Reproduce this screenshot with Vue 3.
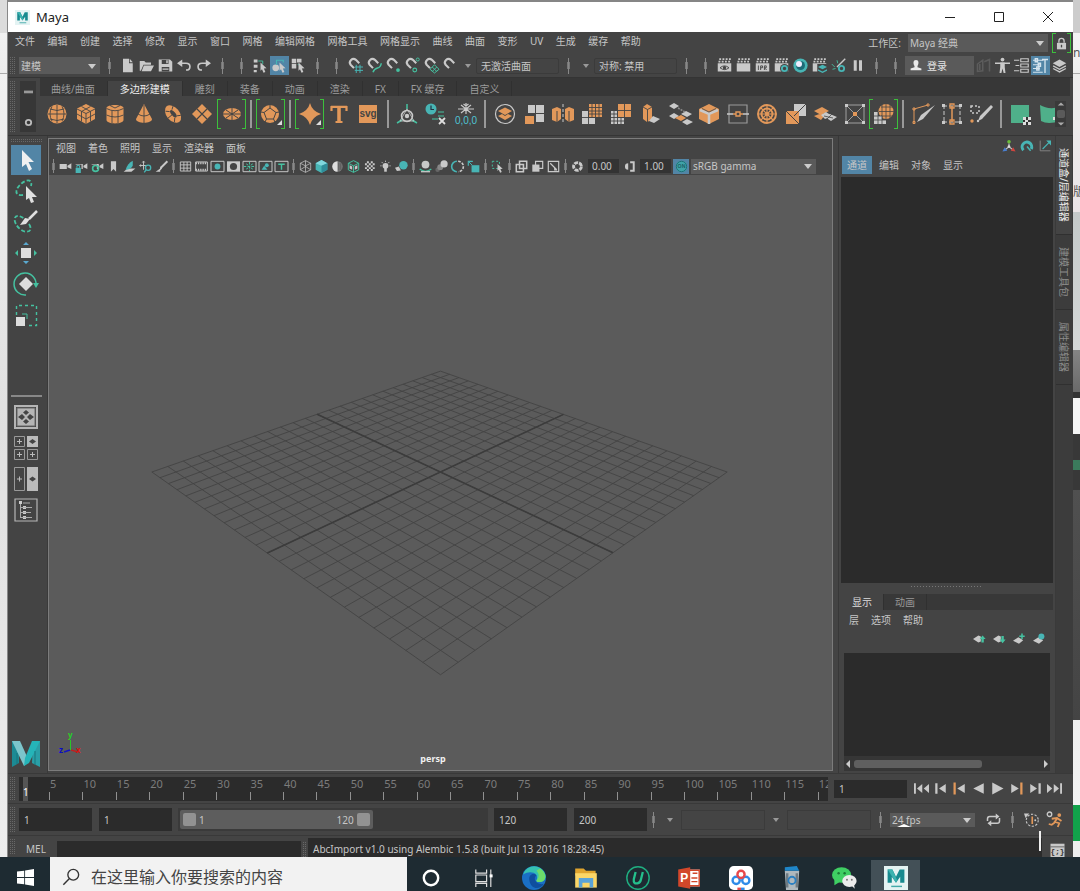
<template>
  <div class="desktop">
    <div class="screen">
      <div class="behind behind--left"></div>

      <main class="maya">
        <header class="titlebar">
          <svg class="title-logo" viewBox="0 0 20 20" v-html="icons.mayaTile"></svg>
          <h1>Maya</h1>
          <div class="window-buttons">
            <button aria-label="minimize"><svg viewBox="0 0 12 12"><path d="M1 6.500H11" stroke="#222" fill="none" /></svg></button>
            <button aria-label="maximize"><svg viewBox="0 0 12 12"><path d="M1.500 1.500H10.500V10.500H1.500z" stroke="#222" fill="none" /></svg></button>
            <button aria-label="close"><svg viewBox="0 0 12 12"><path d="M1 1L11 11M11 1L1 11" stroke="#222" fill="none" /></svg></button>
          </div>
        </header>

        <div class="menubar">
          <nav class="main-menu">
            <button v-for="m in menus" :key="m">{{ m }}</button>
          </nav>
          <div class="workspace-pick">
            <label for="workspace">工作区:</label>
            <span class="combo combo--workspace">
              <select id="workspace"><option>Maya 经典</option></select>
            </span>
            <button class="lock framed" aria-label="lock"><svg viewBox="0 0 20 20" v-html="icons.lock"></svg></button>
          </div>
        </div>

        <!-- 状态行 -->
        <div class="status-line">
          <i class="grip"></i>
          <span class="combo combo--mode">
            <select aria-label="menu set"><option>建模</option></select>
          </span>
          <template v-for="(t, i) in statusA" :key="'a' + i">
            <i v-if="t === '|'" class="sep"></i>
            <i v-else-if="t === 'v'" class="drop"></i>
            <button v-else class="cell" :class="{ on: t === 'selObject' }" :aria-label="t"><svg viewBox="0 0 20 20" v-html="icons[t]"></svg></button>
          </template>
          <input class="status-field" value="无激活曲面" aria-label="live surface">
          <i class="sep"></i>
          <i class="drop"></i>
          <input class="status-field" value="对称: 禁用" aria-label="symmetry">
          <template v-for="(t, i) in statusB" :key="'b' + i">
            <i v-if="t === '|'" class="sep"></i>
            <button v-else class="cell" :aria-label="t"><svg viewBox="0 0 20 20" v-html="icons[t]"></svg></button>
          </template>
          <button class="login">
            <svg viewBox="0 0 20 20" v-html="icons.user"></svg>登录
          </button>
          <button v-for="t in statusC" :key="t" class="cell" :class="{ on: t === 'toolSettings' }" :aria-label="t">
            <svg viewBox="0 0 20 20" v-html="icons[t]"></svg>
          </button>
        </div>

        <!-- 工具架 -->
        <section class="shelf">
          <i class="grip"></i>
          <div class="shelf-side">
            <button aria-label="shelf menu"><svg viewBox="0 0 10 10"><path d="M0 4h10v3H0z" fill="#999" /></svg></button>
            <button aria-label="shelf options"><svg viewBox="0 0 10 10"><circle cx="5" cy="5" r="3" stroke="#bbb" stroke-width="2" fill="none" /></svg></button>
          </div>
          <div class="shelf-main">
            <div class="shelf-tabs">
              <button v-for="s in shelfTabs" :key="s" :class="{ active: s === activeShelf }" @click="activeShelf = s">{{ s }}</button>
            </div>
            <div class="shelf-icons">
              <template v-for="(t, i) in shelfIcons" :key="i">
                <i v-if="t === '|'" class="shelf-sep"></i>
                <button v-else class="shelf-cell" :class="{ framed: framed.includes(t) }" :aria-label="t">
                  <svg viewBox="0 0 20 20" v-html="icons[t]"></svg>
                </button>
              </template>
              <div class="shelf-scroll">
                <button aria-label="up"><svg viewBox="0 0 10 6"><path d="M1 5L5 1L9 5z" fill="#aaa" /></svg></button>
                <i></i>
                <button aria-label="down"><svg viewBox="0 0 10 6"><path d="M1 1L5 5L9 1z" fill="#aaa" /></svg></button>
              </div>
            </div>
          </div>
        </section>

        <div class="workspace">
          <aside class="toolbox">
            <i class="grip grip--flat"></i>
            <div class="tools">
              <button v-for="t in tools" :key="t" :class="{ on: t === 'arrow' }" :aria-label="t"><svg viewBox="0 0 30 30" v-html="icons[t]"></svg></button>
            </div>
            <div class="layouts">
              <button v-for="t in layouts" :key="t" :aria-label="t"><svg viewBox="0 0 30 30" v-html="icons[t]"></svg></button>
            </div>
            <svg class="m-logo" viewBox="0 0 28 26" v-html="icons.mLogo"></svg>
          </aside>

          <section class="panel">
            <div class="panel-menu">
              <button v-for="m in panelMenus" :key="m">{{ m }}</button>
            </div>
            <div class="panel-tools">
              <template v-for="(t, i) in panelIcons" :key="i">
                <i v-if="t === '|'" class="sep sep--panel"></i>
                <button v-else class="panel-cell" :aria-label="t"><svg viewBox="0 0 20 20" v-html="icons[t]"></svg></button>
              </template>
              <input class="num" value="0.00" aria-label="exposure">
              <button class="panel-cell" aria-label="gamma"><svg viewBox="0 0 20 20" v-html="icons.gamma"></svg></button>
              <input class="num" value="1.00" aria-label="gamma value">
              <button class="panel-cell on" aria-label="color management"><svg viewBox="0 0 20 20" v-html="icons.cmOn"></svg></button>
              <span class="combo combo--view">
                <select aria-label="view transform"><option>sRGB gamma</option></select>
              </span>
            </div>
            <div class="canvas">
              <svg class="grid-svg" viewBox="0 0 784 595">
                <path :d="gridPath" stroke="#444" stroke-width="0.9" fill="none" />
                <path :d="axisPath" stroke="#3c3c3c" stroke-width="1.600" fill="none" />
              </svg>
              <svg class="gizmo" viewBox="0 0 26 26">
                <path d="M12.500 8V18" stroke="#28c828" />
                <path d="M12 18L6 20" stroke="#1414c0" stroke-width="1.500" />
                <path d="M13 18L20 20" stroke="#c02020" stroke-width="1.500" />
                <text x="10" y="6" fill="#28d028" font-size="8" font-weight="700">y</text>
                <text x="1" y="21" fill="#0a0ac8" font-size="8" font-weight="700">z</text>
                <text x="18" y="21" fill="#d81414" font-size="8" font-weight="700">x</text>
              </svg>
              <span class="camera-name">persp</span>
            </div>
          </section>

          <aside class="channel">
            <div class="channel-top">
              <svg v-for="t in channelIcons" :key="t" viewBox="0 0 20 20" v-html="icons[t]"></svg>
            </div>
            <div class="channel-menu">
              <button class="on">通道</button>
              <button>编辑</button>
              <button>对象</button>
              <button>显示</button>
            </div>
            <div class="channel-box"></div>
            <div class="splitter"></div>
            <div class="layer">
              <div class="layer-tabs">
                <button class="active">显示</button>
                <button>动画</button>
              </div>
              <div class="layer-menu">
                <button>层</button>
                <button>选项</button>
                <button>帮助</button>
              </div>
              <div class="layer-tools">
                <button v-for="t in layerIcons" :key="t" :aria-label="t"><svg viewBox="0 0 20 20" v-html="icons[t]"></svg></button>
              </div>
              <div class="layer-list">
                <div class="hscroll">
                  <svg viewBox="0 0 8 10"><path d="M6 1V9L2 5z" fill="#ccc" /></svg>
                  <div class="hscroll-track"><i></i></div>
                  <svg viewBox="0 0 8 10"><path d="M2 1V9L6 5z" fill="#ccc" /></svg>
                </div>
              </div>
            </div>
          </aside>

          <div class="side-tabs">
            <button class="active">通道盒/层编辑器</button>
            <button>建模工具包</button>
            <button>属性编辑器</button>
          </div>
        </div>

        <!-- 时间滑块 -->
        <div class="time-row">
          <i class="grip"></i>
          <div class="timeline">
            <b class="now">1</b>
            <span v-for="f in frames" :key="f" class="tick">{{ f }}</span>
          </div>
          <input class="field field--now" value="1" aria-label="current time">
          <div class="playback">
            <button v-for="t in playback" :key="t" :aria-label="t"><svg viewBox="0 0 20 20" v-html="icons[t]"></svg></button>
          </div>
        </div>

        <div class="range-row">
          <i class="grip"></i>
          <input class="field" value="1" aria-label="animation start">
          <input class="field" value="1" aria-label="playback start">
          <div class="range-slider">
            <div class="range-bar">
              <i></i><span>1</span><span class="range-end">120</span><i></i>
            </div>
          </div>
          <input class="field" value="120" aria-label="playback end">
          <input class="field" value="200" aria-label="animation end">
          <div class="range-right">
            <i class="sep sep--range"></i>
            <i class="drop"></i>
            <input class="ghost-field" aria-label="animation layer">
            <i class="drop"></i>
            <input class="ghost-field" aria-label="character set">
            <i class="sep"></i>
            <span class="combo combo--fps">
              <select aria-label="frame rate"><option>24 fps</option></select>
              <i class="glint"></i>
            </span>
            <button class="cell cell--loop" aria-label="loop"><svg viewBox="0 0 20 20" v-html="icons.loop"></svg></button>
            <i class="sep"></i>
            <button class="cell" aria-label="auto key"><svg viewBox="0 0 20 20" v-html="icons.autoKey"></svg></button>
            <button class="cell cell--run" aria-label="preferences"><svg viewBox="0 0 20 20" v-html="icons.runner"></svg></button>
          </div>
        </div>

        <div class="command-row">
          <i class="grip"></i>
          <label for="mel">MEL</label>
          <input id="mel" class="mel">
          <i class="grip grip--mid"></i>
          <output>AbcImport v1.0 using Alembic 1.5.8 (built Jul 13 2016 18:28:45)</output>
          <i class="caret"></i>
          <button class="script" aria-label="script editor"><svg viewBox="0 0 20 20" v-html="icons.script"></svg></button>
        </div>
      </main>

      <div class="behind behind--right">
        <span class="frag frag--a">n</span>
        <span class="frag frag--b">版</span>
      </div>
    </div>

    <footer class="taskbar">
      <button class="start" aria-label="start">
        <svg viewBox="0 0 20 20"><path d="M0 3L8.500 2V9.500H0zM9.500 1.800L20 0V9.500H9.500zM0 10.500H8.500V18L0 17zM9.500 10.500H20V20L9.500 18.300z" fill="#fff" /></svg>
      </button>
      <label class="search">
        <svg viewBox="0 0 20 20"><circle cx="12.500" cy="7.500" r="6" fill="none" stroke="#333" stroke-width="1.500" /><path d="M8 12L1.500 18.500" stroke="#333" stroke-width="1.600" /></svg>
        <input placeholder="在这里输入你要搜索的内容" aria-label="search">
      </label>
      <div class="apps">
        <button v-for="a in apps" :key="a" :class="{ running: a === 'mayaTile' }" :aria-label="a"><svg viewBox="0 0 20 20" v-html="icons[a]"></svg></button>
      </div>
    </footer>
  </div>
</template>

<script setup>
import { ref } from 'vue';

const menus = ['文件', '编辑', '创建', '选择', '修改', '显示', '窗口', '网格', '编辑网格', '网格工具', '网格显示', '曲线', '曲面', '变形', 'UV', '生成', '缓存', '帮助'];
const panelMenus = ['视图', '着色', '照明', '显示', '渲染器', '面板'];
const shelfTabs = ['曲线/曲面', '多边形建模', '雕刻', '装备', '动画', '渲染', 'FX', 'FX 缓存', '自定义'];
const activeShelf = ref('多边形建模');

// '|' 是分隔条, 'v' 是下拉箭头
const statusA = ['|', 'newFile', 'open', 'save', 'undo', 'redo', '|', '|', 'selHier', 'selObject', 'selComp', '|', '|', 'snapGrid', 'snapCurve', 'snapPoint', 'snapCenter', 'snapPlane', 'magnet', 'v'];
const statusB = ['|', '|', 'renderEye', 'clap', 'ipr', 'clapGear', 'ball', 'clapLayers', 'lightEdit', 'pause', '|', '|'];
const statusC = ['ghostBox', 'human', 'attrs', 'toolSettings', 'layers'];

const shelfIcons = ['sphere', 'cube', 'cylinder', 'cone', 'torus', 'plane', 'disc', '|', 'platonic', '|', 'superShape', 'typeT', 'svgText', '|',
  'pivot', 'history', 'freeze', '|', 'combine', 'separate', 'mirror', 'smooth', 'reduce', 'extrude', 'bridge', 'bevel', 'collapse', 'wheel', 'triangulate', 'merge', 'target', 'sculptBall', '|',
  'multiCut', 'edgeLoop', 'quadDraw', '|', 'uvPlane', 'uvCyl'];
const framed = ['disc', 'platonic', 'superShape', 'sculptBall'];

const tools = ['arrow', 'lasso', 'paintSel', 'move', 'rotate', 'scale'];
const layouts = ['single', 'four', 'two', 'outliner'];

const panelIcons = ['|', 'cam', 'camLock', 'camAttr', 'bookmark', 'imagePlane', 'panZoom', 'pencil', '|',
  'gridIcon', 'film', 'resGate', 'gateMask', 'fieldChart', 'safeAction', 'safeTitle', '|',
  'wire', 'shaded', 'halfBall', 'textured', 'checker', 'bulb', 'shadow', '|',
  'ao', 'blur', 'aa', 'dof', '|', 'isolate', '|', 'xray', 'xrayJoint', 'expo', '|', 'aperture'];
const channelIcons = ['manip', 'speed', 'hyper'];
const layerIcons = ['layerUp', 'layerDown', 'layerNew', 'layerNewSel'];
const playback = ['toStart', 'stepBack', 'keyBack', 'playBack', 'play', 'keyNext', 'stepNext', 'toEnd'];
const apps = ['cortana', 'taskView', 'edge', 'folder', 'uninst', 'ppt', 'netdisk', 'bin', 'wechat', 'mayaTile'];
const frames = Array.from({ length: 24 }, (_, i) => (i + 1) * 5);

// 地面网格: 单位正方形 -> 透视四边形
const A = [392, 196], B = [679, 297], C = [392, 500], D = [103, 297];
const d1 = [B[0] - C[0], B[1] - C[1]];
const d2 = [D[0] - C[0], D[1] - C[1]];
const s = [A[0] - B[0] + C[0] - D[0], A[1] - B[1] + C[1] - D[1]];
const det = d1[0] * d2[1] - d2[0] * d1[1];
const g = (s[0] * d2[1] - d2[0] * s[1]) / det;
const h = (d1[0] * s[1] - s[0] * d1[1]) / det;

const project = (u, v) => {
  const w = g * u + h * v + 1;
  return [0, 1].map(k => (((B[k] - A[k] + g * B[k]) * u + (D[k] - A[k] + h * D[k]) * v + A[k]) / w).toFixed(1)).join(' ');
};
const crossLines = t => `M${project(t, 0)}L${project(t, 1)}M${project(0, t)}L${project(1, t)}`;
const gridPath = Array.from({ length: 25 }, (_, i) => crossLines(i / 24)).join('');
const axisPath = crossLines(0.5);

// 图标颜色
const W = '#c9c9c9';
const O = '#e2985a';
const T = '#48b5b5';
const E = '#45c1a0';
const K = '#444';

const fill = (c, d) => `<path d="${d}" fill="${c}"/>`;
const line = (c, d, w = 1.5) => `<path d="${d}" fill="none" stroke="${c}" stroke-width="${w}"/>`;
const dash = (c, d, w, gap) => `<path d="${d}" fill="none" stroke="${c}" stroke-width="${w}" stroke-dasharray="${gap}"/>`;
const dot = (c, x, y, r) => `<circle cx="${x}" cy="${y}" r="${r}" fill="${c}"/>`;
const ring = (c, x, y, r, w = 1.5) => `<circle cx="${x}" cy="${y}" r="${r}" fill="none" stroke="${c}" stroke-width="${w}"/>`;

const clapBoard = fill(W, 'M1 7H19V18H1z') + dash(W, 'M2 4.800H19M3 1.500H19', 2.2, '2.500 1.800');
const magnetShape = line(W, 'M8 13.500L3.500 9A4.800 4.800 0 0 1 10.500 2.500L15 7', 2.8);
const cursor = fill(W, 'M10 6L18 13.500L14.500 14L16.500 18.500L14 19.500L12 15L10 17z');
const camera = fill(W, 'M1 6H12V14H1zM13 9L19 5V14L13 11z');
const layerShape = fill(W, 'M0 10L9 4L13 6V14L9 16z');

const icons = {
  mayaTile: fill('#e4f3f3', 'M0 0H20V20H0z') + fill('#178a8f', 'M3 3H7L10 9L13 3H17V14H13.500V9L10 14L6.500 9V14H3z') + fill('#3bb3b0', 'M3 3H7L11 12L10 14z') + line('#4aa', 'M6 17H15', 1.2),
  mLogo: fill('#1c8a94', 'M0 0H7V22L0 26z') + fill('#2a9ea6', 'M21 0H28V26L20 22z') + fill('#7cc5cb', 'M0 0H8L17 20L12 25z') + fill('#25b4b8', 'M20 0H28L17 22L12 25L13 17z') + line('#16747c', 'M5 12V23M23 10V24', 1),
  lock: fill(W, 'M3 9H17V19H3z') + line(W, 'M6 9V6A4 4 0 0 1 14 6V9', 2) + fill(K, 'M9 12H11V16H9z'),

  newFile: fill(W, 'M4 1H12V7H17V19H4z') + fill(W, 'M13 1L17 5.500H13z'),
  open: fill(W, 'M1 17V4H7L9 6H16V9H6L2.500 17zM6.500 10H20L16 17.500H3.500z'),
  save: fill(W, 'M1 2H16L19 5V18H1z') + fill(K, 'M5 2.500H14V8H5zM5 12H15V18H5z') + fill(W, 'M11 3H13V7H11zM6 14H14V15.500H6z'),
  undo: line(W, 'M3 7H12C19 7 19 16 12 16', 2.2) + fill(W, 'M0 7L7 2V12z'),
  redo: line(W, 'M17 7H8C1 7 1 16 8 16', 2.2) + fill(W, 'M20 7L13 2V12z'),
  selHier: fill(W, 'M1 2H6V6H1zM1 9H6V13H1zM1 16H5V19H1z') + line(E, 'M7 4H13V8', 1.2) + cursor,
  selObject: dot(W, 5, 13, 4.5) + line(T, 'M6 9V3H15V6', 1.5) + cursor,
  selComp: fill(W, 'M1 1H7V7H1zM8 1H14V6H8zM1 8H7V14H1z') + line(E, 'M9 8L14 13', 1.2) + cursor,
  magnet: magnetShape,
  snapGrid: line(T, 'M9 12H20M9 16.500H20M11 9V20M16 9V20', 1.3) + magnetShape,
  snapCurve: line(E, 'M8 19C11 10 18 17 19 7', 2) + magnetShape,
  snapPoint: magnetShape + dot(E, 16, 16, 2.5),
  snapCenter: magnetShape + ring(E, 17, 2, 2, 1.3) + ring(E, 13, 16, 2.5, 1.5),
  snapPlane: line(E, 'M8 15L14 9L20 15L14 20zM11 12L17 18M17 12L11 18', 1.3) + magnetShape,

  renderEye: clapBoard + line(K, 'M4 13Q10 8 16 13Q10 18 4 13', 1.2) + dot(K, 10, 13, 2.2),
  clap: clapBoard,
  ipr: clapBoard + line(K, 'M4.500 10V16M7.500 16V10.500H10V13H7.500M12.500 16V10.500H15V13H12.500L15.500 16', 1.2),
  clapGear: clapBoard + dot(K, 14, 14, 6) + ring(T, 14, 14, 3.5, 2.5),
  ball: dot(T, 10, 10, 9.5) + dot('#1d6b77', 10, 10, 6) + dot('#eef', 8, 8, 4),
  clapLayers: clapBoard + fill(K, 'M7 8H20V20H7z') + fill(T, 'M8 12L14 9L20 12L14 15zM8 15L14 18L20 15V17L14 20L8 17z'),
  lightEdit: line(W, 'M19 1L8 12', 2) + line(E, 'M1 8L5 12M2 15L6 14M8 3L9 7', 1.2) + ring(T, 14, 14, 3.5, 2.5),
  pause: fill(W, 'M5 3H9V17H5zM12 3H16V17H12z'),
  user: fill('#e8e8e8', 'M10 1C15 1 15 7 12.500 11V13L19 15V18H1V15L7.500 13V11C5 7 5 1 10 1z'),
  ghostBox: line('#5c5c5c', 'M2 8L9 3V17L2 18zM11 5L18 2V18M5 8V16', 2),
  human: dot(W, 10, 2, 2.5) + line(W, 'M0 7H20', 2) + fill(W, 'M7 6H13V12L14 20H11.500L10 14L8.500 20H6L7 12z'),
  attrs: line(W, 'M0 3H7M2 10H7M0 17H7', 1.5) + line(W, 'M9 1H19V5H9zM9 8H19V12H9zM9 15H19V19H9z', 1.5),
  toolSettings: line('#d5e4ee', 'M0 3H14M0 9H10M0 14H9M0 19H13', 1.5) + line('#d5e4ee', 'M3 1H6V5H3zM7 7H10V11H7zM5 12H8V16H5zM12 2H20M16 3V20', 1.8),
  layers: fill(W, 'M1 7L10 2L19 7L10 12z') + line(W, 'M1.500 10.500L10 15L18.500 10.500M1.500 14L10 18.500L18.500 14', 1.8),

  sphere: dot(O, 10, 10, 9.5) + line(K, 'M1 10H19M3 5Q10 8 17 5M3 15Q10 18 17 15M10 1V19M5 2.500Q1 10 5 17M15 2.500Q19 10 15 17', 0.9),
  cube: fill(O, 'M10 0L19 4.500V15L10 20L1 15V4.500z') + line(K, 'M1 5L10 9.500L19 5M10 9.500V20M5.500 2.500L14.500 7.500V17.500M14.500 2.500L5.500 7.500V17.500M1 10L10 15L19 10', 0.9),
  cylinder: fill(O, 'M1.500 4C1.500 0 18.500 0 18.500 4V16C18.500 20.500 1.500 20.500 1.500 16z') + line(K, 'M1.500 4.500Q10 9 18.500 4.500M1.500 11Q10 15 18.500 11M7 6.500V19M13 6.500V19M5 1.500L10 4L15 1.500', 0.9),
  cone: fill(O, 'M10 0L18 15C18 20 2 20 2 15z') + line(K, 'M4 10Q10 14 16 10M10 1V19', 0.9),
  torus: '<g transform="rotate(50 10 10)">' + `<ellipse cx="10" cy="10" rx="10" ry="6.500" fill="${O}"/><ellipse cx="10" cy="9.500" rx="4.500" ry="2" fill="${K}"/>` + line(K, 'M10 11V17M4 5L6 8M16 5L14 8M3 14L6 11M17 14L14 11', 0.9) + '</g>',
  plane: fill(O, 'M10 0L20 10L10 20L0 10z') + line(K, 'M5 5L15 15M15 5L5 15', 1.2),
  disc: `<ellipse cx="10" cy="10" rx="9" ry="6" fill="${O}"/>` + line(K, 'M10 4V16M1 10H19M4 6L16 14M16 6L4 14', 1),
  platonic: dot(O, 9, 10, 9) + line(K, 'M9 4L15 8.500L12.500 15H5.500L3 8.500zM9 4V1M15 8.500L18 8M12.500 15L14 18M5.500 15L4 18M3 8.500L0 8', 1) + fill('#ddd', 'M21 16V21H16z'),
  superShape: fill(O, 'M10 -1Q12 7 21 10Q12 13 10 21Q8 13 -1 10Q8 7 10 -1z') + fill('#ddd', 'M21 16V21H16z'),
  typeT: line(O, 'M2 2.800H18M10 2V18M6.500 18H13.500M2.500 2V7M17.500 2V7', 2.2) + line(O, 'M10 2V18', 3.5),
  svgText: fill(O, 'M1 1H19V19H1z') + '<text x="10" y="13" font-size="10" font-weight="700" text-anchor="middle" fill="#444" font-family="Liberation Sans">svg</text>',
  pivot: ring(W, 10, 12, 5.5, 1.5) + dot(W, 10, 12, 2.2) + line(E, 'M10 0V5M5 16L0 19M15 16L20 19', 1.5) + line(W, 'M10 5L3 17H17z', 0.8),
  history: dot(T, 5, 5, 5.5) + line('#234', 'M5 1.500V5.500H8', 1.2) + line(E, 'M12 8H18M12 12H18M6 15H12', 1.2) + line('#ddd', 'M13 14L19 20M19 14L13 20', 1.8),
  freeze: line(W, 'M10 -1V10M5 1L15 9M15 1L5 9M7.500 0L10 2L12.500 0M2 5H18', 1.2) + '<text x="10" y="20" font-size="10" text-anchor="middle" fill="#4fc3d3" font-family="Liberation Sans">0,0,0</text>',
  combine: ring(W, 10, 10, 9.5, 1.2) + fill(O, 'M3 7L10 3.500L17 7L10 11zM3 12L7 10L10 12L13 10L17 12L10 16z'),
  separate: fill(W, 'M4 1H11V9H4zM12 1H20V9H12zM12 10H20V18H12z') + fill(O, 'M1 12H10V20H1z'),
  mirror: fill(O, 'M-1 5L4 3L8 5V15L4 18L-1 16zM12 5L16 3L21 5V16L16 18L12 15z') + line(K, 'M4 7V18M16 7V18', 1) + dash(W, 'M10 0V20', 1, '3 2'),
  smooth: fill(O, 'M7 0H20V13H7z') + fill(W, 'M0 7H6V14H13V20H0z') + line(K, 'M10 0V13M13.500 0V13M17 0V13M7 3.500H20M7 7H20M7 10H20M6.500 14V20M0 13.500H7', 0.9),
  reduce: fill(O, 'M7 0H20V13H7z') + fill(W, 'M0 7H6V14H13V20H0z') + line(K, 'M13.500 0V13M7 6.500H20M3 7V20M6.500 13V20M10 13V20M0 10H7M0 13.500H7M0 17H13', 0.9),
  extrude: fill(O, 'M2 3L6 0L11 3V16L6 18L2 15z') + line(K, 'M2 3L6.500 5.500L11 3M6.500 5.500V18', 0.9) + fill(W, 'M12 12L19 15L13 19L8 17z'),
  bridge: fill(W, 'M-1 2L4 -1L9 2L4 5zM-1 12L4 9L9 12L4 15zM16 7L22 10L17 13L11 10zM12 18L17 15L23 18L17 21z') + fill(O, 'M5 14L11 11L16 14L11 17z') + dash('#888', 'M8 4L15 8', 1.5, '2 1'),
  bevel: fill(O, 'M10 0L20 5V15L10 20L0 15V5z') + line(W, 'M1 6L10 10L19 6M10 10V20', 2.5) + line(K, 'M3 4.500L10 8L17 4.500', 0.8),
  collapse: line('#999', 'M1 1H19V19H1z', 1.2) + line(W, 'M-1 10H5M15 10H21', 1.5) + line(O, 'M8 8H12V12H8zM5 10H8M12 10H15', 1.4),
  wheel: ring(O, 10, 10, 9, 2) + ring(O, 10, 10, 5.5, 2) + dot(O, 10, 10, 2) + line(O, 'M10 1V19M1 10H19M3.500 3.500L16.500 16.500M16.500 3.500L3.500 16.500', 1.2),
  triangulate: fill(W, 'M8 0H20V12H8z') + fill(O, 'M0 7H13V20H0z') + line(K, 'M0 7L13 20M8 12L20 0', 1),
  merge: fill(O, 'M-1 7L7 3L14 7L6 11zM-1 12L7 9L10 11L6 16z') + fill(W, 'M10 13L15 10L22 13L16 17zM6 11L11 8L17 12L10 15z') + line(K, 'M9 12L18 14M12 15L17 10', 0.8),
  target: line('#aaa', 'M1 1H19V19H1zM1 1L19 19M19 1L1 19', 0.9) + fill(W, 'M0 0H3V3H0zM17 0H20V3H17zM0 17H3V20H0zM17 17H20V20H17z') + fill(O, 'M8 8H12V12H8z'),
  sculptBall: dot(O, 12, 7.5, 7.5) + line(K, 'M5 7.500H20M12 0V15M7 3H18M7 12H18M8 1V14M16 1V14', 0.8) + fill(W, 'M0 8H4V12H8V16H12V20H0z') + line(K, 'M4 8V20M8 12V20M0 12H8M0 16H12', 0.8),
  multiCut: line(O, 'M1 19V5L15 1', 1) + line(O, 'M0 17.500H2V19.500H0zM0 4H2V6H0zM14 0H16V2H14z', 1) + fill(W, 'M22 1L10 15L4 18L8 11z'),
  edgeLoop: dash(W, 'M1 2H19M1 18H19M2 1V19M18 1V19', 1, '4 2') + line(O, 'M10 2V18', 1.5) + line(O, 'M8 0H12V4H8zM8 16H12V20H8z', 1.3) + fill(W, 'M0 0H3V3H0zM17 0H20V3H17zM0 17H3V20H0zM17 17H20V20H17z'),
  quadDraw: dash(W, 'M0 2H8V9H0z', 1.5, '2 2') + dot(O, 1, 17, 1.7) + dot(W, 7, 17, 1.2) + fill(W, 'M22 3L11 15L7 17L9 12L20 1z'),
  uvPlane: fill('#4fb08a', 'M1 1H19V19H1z') + fill('#333', 'M13 13H21V21H13z') + fill('#ddd', 'M13 13H16V16H13zM18 13H21V16H18zM15 16H18V18H15zM13 18H16V21H13zM18 18H21V21H18z'),
  uvCyl: fill('#4fb08a', 'M0 1Q8 6 20 3V17Q8 21 1 17z') + fill('#ddd', 'M13 13H16V16H13zM18 13H21V16H18zM15 16H18V18H15z'),

  arrow: fill('#f0f0f0', 'M11 5L23 17H17.500L21 24L18 26L15 19L11 22z'),
  lasso: dash(E, 'M12 19C3 20 4 13 10 8C15 3 22 3 20 10', 1.8, '4 2') + fill('#e0e0e0', 'M15 10L26 21H21L23 26L20 27L18 22L15 24z'),
  paintSel: dash(E, 'M18 17C23 25 15 27 9 22C2 16 2 8 8 9C11 10 14 12 16 14', 1.8, '4 2') + line('#e0e0e0', 'M26 4L18 12', 2.5) + fill('#e0e0e0', 'M19 12L15 17L9 18L14 11z'),
  move: fill('#ddd', 'M10 10H20V20H10z') + fill('#5aa9d0', 'M12 7L15 4L18 7zM12 23H18L15 26z') + fill(E, 'M4 15L7 12V18zM26 15L23 12V18z'),
  rotate: fill('#ddd', 'M15 8L22 15L15 22L8 15z') + line(E, 'M25 16A11 11 0 1 0 15 26', 1.5) + fill(E, 'M22 14H28L25 19z'),
  scale: fill('#ddd', 'M5 17H14V26H5z') + dash(E, 'M5.500 15V5.500H25.500V25.500H16', 1.4, '3 3') + line(E, 'M11 14H16V19', 1),
  single: line('#b5b5b5', 'M4 4H26V26H4z', 2) + fill('#b5b5b5', 'M6 6H24V24H6z') + fill(K, 'M15 8L18 10.500L15 13L12 10.500zM11 12L14 15L11 18L7 15zM19 12L23 15L19 18L16 15zM15 17L18 19.500L15 22L12 19.500z') + line('#666', 'M6 6H24V24H6z', 1),
  four: line('#999', 'M3.500 3.500H13.500V13.500H3.500zM3.500 16.500H13.500V26.500H3.500zM16.500 16.500H26.500V26.500H16.500z', 1) + fill('#bbb', 'M16 3H27V14H16z') + fill(K, 'M18 8.500L21.500 6L25 8.500L21.500 11z') + line('#bbb', 'M8.500 6V11M6 8.500H11M8.500 19V24M6 21.500H11M21.500 19V24M19 21.500H24', 1),
  two: line('#999', 'M3.500 3.500H13.500V26.500H3.500z', 1) + fill('#bbb', 'M16 3H27V27H16z') + fill(K, 'M18 15L21.500 12.500L25 15L21.500 17.500z') + line('#bbb', 'M8.500 12.500V17.500M6 15H11', 1),
  outliner: line('#b5b5b5', 'M4 4H26V26H4z', 1.2) + fill('#ccc', 'M8 6H11V9H8zM12 11H15V14H12zM12 16H15V19H12zM12 21H15V24H12z') + line('#aaa', 'M12 8H19M9.500 9V23M10 12.500H21M10 17.500H20M10 22.500H21', 1),

  cam: camera,
  camLock: camera + fill(K, 'M0 7H10V20H0z') + fill(T, 'M1 12H9V20H1z') + line(T, 'M3 12V8.500H7V12', 1.5),
  camAttr: camera + fill(K, 'M0 7H9V20H0z') + ring(E, 7, 13, 4.5, 2.5),
  bookmark: fill(W, 'M6 2H14V18L10 14L6 18z'),
  imagePlane: fill(W, 'M1 18L7 13H19L13 18z') + fill(T, 'M4 15C6 8 10 4 15 1V9C13 13 9 15 4 15z'),
  panZoom: line(W, 'M7 2V15M1 8.500H13', 1.5) + line(W, 'M5 4L7 1.500L9 4M3 6.500L1 8.500L3 10.500', 1.2) + ring(T, 14, 12, 4, 2) + line(T, 'M11 15L8 19', 2),
  pencil: line(W, 'M19 2L9 12', 3) + fill(W, 'M8 10L11 13L7 17zM1 18L8 13V18z'),
  gridIcon: line(W, 'M2 3H18V17H2zM7.500 3V17M12.500 3V17M2 7.500H18M2 12.500H18', 1.4),
  film: line(W, 'M1 3H19V17H1z', 1.5) + dash(W, 'M1 5H19M1 15H19', 3, '2 1.500'),
  resGate: line(W, 'M0 2H20V18H0z', 1.5) + dot(T, 10, 10, 4.5),
  gateMask: fill(W, 'M0 2H20V18H0z') + dot(K, 10, 10, 5.5),
  fieldChart: line(W, 'M0 2H20V18H0z', 1.5) + dash(E, 'M10 3V17M1 10H19', 1.6, '4 2') + line(E, 'M5 6L8 8M15 6L12 8M5 14L8 12M15 14L12 12', 1.5),
  safeAction: line(W, 'M0 2H20V18H0z', 1.5) + dot(T, 12, 8, 3) + fill(T, 'M4 15L8 9L13 15z'),
  safeTitle: line(W, 'M0 2H20V18H0z', 1.5) + line(E, 'M5 6.500H15M10 6V15', 2.2),
  wire: line(W, 'M10 1L18 5V15L10 19L2 15V5zM2 5L10 9L18 5M10 9V19M10 1V9M2 15L10 10L18 15', 1.1),
  shaded: fill(T, 'M10 0L19 5V15L10 20L1 15V5z') + fill('#80d6dd', 'M10 0L19 5L10 9L1 5z') + fill('#2f8c99', 'M19 5V15L10 20V9z'),
  halfBall: dot('#777', 10, 10, 8) + fill('#ddd', 'M10 2A8 8 0 0 0 10 18z') + line(K, 'M12 4V16M15 5V15', 0.8),
  textured: line(E, 'M10 1L18 5V15L10 19L2 15V5zM2 5L10 9L18 5M10 9V19', 1.5) + fill(W, 'M4 8L8 10V15L4 13zM12 10L16 8V13L12 15z'),
  checker: fill(W, 'M6 2H9V5H6zM12 2H15V5H12zM3 5H6V8H3zM9 5H12V8H9zM15 5H18V8H15zM6 8H9V11H6zM12 8H15V11H12zM3 11H6V14H3zM9 11H12V14H9zM15 11H18V14H15zM6 14H9V17H6zM12 14H15V17H12z'),
  bulb: dot(W, 10, 9, 4.5) + fill(W, 'M8 12H12V18H8z') + line(W, 'M10 1V3M2 9H4M16 9H18M4 3L6 5M16 3L14 5', 1.3),
  shadow: dot(T, 13, 8, 6.5) + fill(W, 'M0 12L6 10L9 16L3 17z'),
  ao: dot(W, 10, 7, 6) + line(E, 'M1 14Q10 21 19 14', 2) + fill(W, 'M3 17H17V19H3z'),
  blur: dot('#666', 4, 15, 3.5) + dot('#888', 8, 11, 4.5) + dot(W, 14, 6, 5.5),
  aa: line(T, 'M9 2A8 8 0 0 0 9 18', 2.5) + dash(W, 'M11 2A8 8 0 0 1 11 18', 2.5, '4 2'),
  dof: fill(T, 'M7 8H19V19H7z') + line(T, 'M2 9V2H9', 1.8) + line(T, 'M3 3L8 8', 1.5),
  isolate: dash(E, 'M2 2H13V13H2z', 1.5, '3 3') + cursor,
  xray: line(W, 'M7 2H18V13H7zM2 7H13V18H2z', 2.4),
  xrayJoint: line(W, 'M7 2H18V13H7z', 1.8) + fill(W, 'M2 7H13V18H2z'),
  expo: line(W, 'M2 2H18V18H2zM5 5L15 15', 1.8) + fill(W, 'M11 11L16 16H11z'),
  aperture: `<circle cx="10" cy="10" r="6" fill="none" stroke="${W}" stroke-width="4.500" stroke-dasharray="6 1.500"/>`,
  gamma: fill(W, 'M8 5V15A5 5 0 0 1 8 5zM11 2H18V18H11V15H15V5H11z'),
  cmOn: dot('#3fa3a8', 10, 10, 9) + ring('#1f6d75', 10, 10, 8, 1.5) + '<text x="10" y="13" font-size="8" font-weight="700" text-anchor="middle" fill="#1c5f66" font-family="Liberation Sans">ON</text>',

  manip: line(W, 'M10 11V6M10 11L4 16M10 11L16 16', 2) + dot('#6bbf3a', 10, 3, 3) + fill('#4a7fd0', 'M-1 19L3 12L7 18z') + fill('#d0453e', 'M21 19L17 12L13 18z') + dot('#ddd', 10, 11, 2.2),
  speed: line(T, 'M4 17A8 8 0 1 1 17 15', 5) + line(T, 'M10 11L16 18', 2.5),
  hyper: line('#888', 'M2 1V18H19', 1.5) + line(T, 'M6 15L17 4', 2) + fill(T, 'M12 1H20V9z'),
  layerUp: layerShape + fill(E, 'M16 4L21 10H18V16H14V10H11z'),
  layerDown: layerShape + fill(E, 'M16 17L21 11H18V5H14V11H11z'),
  layerNew: fill(W, 'M0 13L9 7L17 12L10 18z') + line(E, 'M15 1V10M10.500 5.500H19.500', 2.6),
  layerNewSel: fill(W, 'M0 13L9 7L17 12L10 18z') + dot(T, 14, 6, 5),

  toStart: fill(W, 'M0 3H2.500V17H0zM11 4V16L4 10zM20 4V16L13 10z'),
  stepBack: fill(W, 'M3 3H6V17H3zM17 4V16L8 10z'),
  keyBack: fill(O, 'M2 2H5V18H2z') + fill(W, 'M17 4V16L7 10z'),
  playBack: fill(W, 'M17 3V17L3 10z'),
  play: fill(W, 'M3 2V18L18 10z'),
  keyNext: fill(O, 'M15 2H18V18H15z') + fill(W, 'M3 4V16L13 10z'),
  stepNext: fill(W, 'M14 3H17V17H14zM3 4V16L12 10z'),
  toEnd: fill(W, 'M17.500 3H20V17H17.500zM0 4V16L7 10zM9 4V16L16 10z'),
  loop: line(W, 'M2 12V9Q2 6 5 6H15M18 8V12Q18 15 15 15H5', 2) + fill(W, 'M13 2L18 6L13 10zM7 11L2 15L7 19z'),
  autoKey: `<circle cx="11" cy="11" r="8" fill="none" stroke="${W}" stroke-width="1.500" stroke-dasharray="3 2"/>` + line(O, 'M11 6V16', 2.2) + fill(W, 'M0 2L7 2L2 8z') + dot(W, 15, 11, 1.3),
  runner: ring(W, 2, 3, 3, 1.8) + dot(O, 15, 4, 2.5) + line(O, 'M5 9L12 8L18 12M12 9L9 13L15 15L13 20M9 14L5 17L1 16', 2.4),
  script: fill(W, 'M0 1H20V20H0z') + line(K, 'M0 5.500H20', 1) + '<text x="10" y="16" font-size="11" font-weight="700" text-anchor="middle" fill="#333" font-family="Liberation Mono">{;}</text>',

  cortana: ring('#fff', 10, 10, 6, 2),
  taskView: line('#ddd', 'M4 3V6H13V3M4 7.500H13V13H4zM4 17.500V14.500H13V17.500M16.500 3V17.500', 1) + fill('#fff', 'M15.500 7H18V9.500H15.500z'),
  edge: dot('#1a6fc4', 10, 10, 10) + fill('#35c1b1', 'M1 7C4 -2 16 -2 19.500 7C21 13 13 15 12 12C15 6 7 3 1 7z') + fill('#6ddc6a', 'M15 2C20 5 21 11 17 13C13 14 12 13 12 12C15 9 14 6 12 4z') + fill('#0f4f9e', 'M6 11C6 6 11 6 12 8C9 10 11 16 18 15C15 20 7 20 6 11z'),
  folder: fill('#e0a52e', 'M1 2H8L10 4H18V8H1z') + fill('#fbd667', 'M1 6H19V18H1z') + fill('#5aa3d8', 'M4 10H16V18H13V14H7V18H4z'),
  uninst: ring('#1fae80', 10, 10, 9.3, 1.2) + line('#24c08c', 'M8 5L6.500 11Q6 15 9.500 14.500Q12 14 12.500 11L14 5', 1.9),
  ppt: fill('#fff', 'M10 3H19V17H10z') + line('#d2472a', 'M10 3.500H18.500V16.500H10M12 10H17M12 13H17M13 6H17', 1.2) + fill('#d2472a', 'M1 3L11 1V19L1 17z') + '<text x="6" y="13.500" font-size="10" font-weight="700" text-anchor="middle" fill="#fff" font-family="Liberation Sans">P</text>',
  netdisk: '<rect width="20" height="20" rx="4" fill="#fff"/>' + ring('#2f8be8', 6, 12, 3, 2) + ring('#2f8be8', 14, 12, 3, 2) + ring('#e8484a', 10, 7, 3, 2) + fill('#e8484a', 'M7 18H10V20H7z') + fill('#2f8be8', 'M10 18H13V20H10z'),
  bin: fill('#aeb8bd', 'M4 4H16L15 20H5z') + fill('#1f86c8', 'M4 1L14 0L16 4H4z') + fill('#6f7b82', 'M5 6H7V18H5zM13 6H15V18H13z') + ring('#2a7fc0', 10, 12, 3, 1.6),
  wechat: '<ellipse cx="8" cy="7.500" rx="8" ry="6.500" fill="#3fcf63"/><ellipse cx="14.500" cy="12.500" rx="6" ry="5" fill="#ececec"/>' + fill('#3fcf63', 'M2 11L2 16L7 13z') + fill('#ececec', 'M16 16L19 19L18 14z') + dot('#1b7a36', 5.5, 6, 1) + dot('#1b7a36', 10.5, 6, 1) + dot('#777', 12.5, 11.5, 0.8) + dot('#777', 16.5, 11.5, 0.8),
};
</script>

<style>
body {
  margin: 0;
  background: #444;
}
</style>

<style scoped>
.desktop {
  display: flex;
  flex-direction: column;
  height: 100vh;
  overflow: hidden;
  font-family: "Noto Sans", "Noto Sans CJK SC", sans-serif;
  font-size: 10px;
  line-height: 14px;
  color: #c6c6c6;
}

button,
input,
select {
  font: inherit;
  color: inherit;
  margin: 0;
  padding: 0;
  border: 0;
  background: none;
  box-sizing: border-box;
  min-width: 0;
  white-space: nowrap;
}

svg {
  display: block;
  overflow: visible;
}

.screen {
  flex: 1;
  display: flex;
  min-height: 0;
}

.behind--left {
  width: 8px;
  box-sizing: border-box;
  border-right: 1px solid #888;
  background: linear-gradient(#dcdcdc 33px, #f1f1f1 33px, #ececec 73px, #aaa 73px, #aaa 74px, #f0f0f0 74px, #e0e0e0 50%, #ededed);
}

.behind--right {
  width: 7px;
  position: relative;
  overflow: hidden;
  color: #555;
  background: linear-gradient(#ccc 33px, #f4f4f4 33px, #eee 73px, #aaa 73px, #aaa 74px, #eee 74px, #eae4e6 212px, #c4c9c9 212px, #d4d8d8 350px, #858585 350px, #6a6a6a 392px, #333 392px, #333 398px, #f5f5f5 398px, #f5f5f5 434px, #383838 434px, #383838 460px, #3b7a5c 460px, #3b7a5c 470px, #383838 470px, #383838 490px, #505050 490px, #444 720px, #eee 720px, #f3f3f3 805px, #12a24b 805px, #12a24b 841px, #eee 841px);
}

.frag {
  position: absolute;
  left: 0;
  font-size: 12px;
}

.frag--a {
  top: 46px;
}

.frag--b {
  top: 185px;
}

.maya {
  flex: 1;
  min-width: 0;
  display: flex;
  flex-direction: column;
  background: #444;
}

/* 标题栏 */
.titlebar {
  height: 32px;
  box-sizing: border-box;
  border-top: 2px solid #868686;
  background: #fff;
  display: flex;
  align-items: center;
  padding: 0 1px 0 7px;
  color: #222;
}

.title-logo {
  width: 15px;
  height: 15px;
}

.titlebar h1 {
  margin: 0 0 0 6px;
  font-size: 13px;
  font-weight: 400;
}

.window-buttons {
  margin-left: auto;
  display: flex;
}

.window-buttons button {
  width: 49px;
  height: 28px;
  display: grid;
  place-items: center;
}

.window-buttons svg {
  width: 12px;
  height: 12px;
}

.menubar {
  height: 22px;
  display: flex;
  justify-content: space-between;
}

.main-menu {
  flex: 0 1 626px;
  height: 18px;
  margin-left: 7px;
  display: flex;
  justify-content: space-between;
}

.workspace-pick {
  display: flex;
  align-items: center;
  margin-right: 2px;
}

.workspace-pick label {
  margin-right: 7px;
}

.combo {
  position: relative;
  display: flex;
  flex: none;
  background: #5a5a5a;
}

.combo select {
  appearance: none;
  width: 100%;
  height: 100%;
  padding: 0 20px 0 2px;
  font-size: 10px;
}

.combo::after {
  content: "";
  position: absolute;
  right: 4px;
  top: 50%;
  margin-top: -2px;
  border: 4px solid transparent;
  border-top: 5px solid #ccc;
  border-bottom: 0;
  pointer-events: none;
}

.combo--workspace {
  width: 140px;
  height: 18px;
}

.combo--mode {
  width: 81px;
  height: 17px;
}

.combo--mode + .sep {
  width: 18px;
}

.lock {
  width: 19px;
  height: 20px;
  margin-left: 4px;
  display: grid;
  place-items: center;
}

.lock svg {
  width: 13px;
  height: 13px;
}

/* 绿色方括号 */
.framed {
  position: relative;
}

.framed::before,
.framed::after {
  content: "";
  position: absolute;
  top: 0;
  bottom: 0;
  width: 4px;
  box-sizing: border-box;
  border: 1px solid #3cc03c;
}

.framed::before {
  left: 0;
  border-right: 0;
}

.framed::after {
  right: 0;
  border-left: 0;
}

.grip {
  flex: none;
  width: 5px;
  align-self: stretch;
  margin: 2px 4px 2px 2px;
  background: repeating-linear-gradient(#444 0 1px, transparent 1px 2px), repeating-linear-gradient(90deg, #686868 0 1px, #444 1px 2px);
}

.grip--flat {
  width: auto;
  height: 5px;
  margin: 2px 0;
}

.sep {
  flex: none;
  width: 19px;
  height: 16px;
  background: linear-gradient(#888, #888) center / 1px 16px no-repeat, linear-gradient(#777, #777) center / 3px 7px no-repeat;
}

.sep--panel {
  width: 8px;
  height: 14px;
}

.drop {
  flex: none;
  width: 16px;
  display: grid;
  place-items: center;
}

.drop::before {
  content: "";
  border: 3px solid transparent;
  border-top: 4px solid #999;
  border-bottom: 0;
}

/* 状态行 */
.status-line {
  height: 23px;
  display: flex;
  align-items: center;
  border-bottom: 1px solid #343434;
}

.cell {
  flex: none;
  width: 19px;
  height: 19px;
  display: grid;
  place-items: center;
}

.cell svg {
  width: 15px;
  height: 15px;
}

.on {
  background: #5285a6;
}

.status-field {
  width: 83px;
  height: 16px;
  padding: 0 4px;
  border: 1px solid #3b3b3b;
  border-radius: 2px;
}

.login {
  width: 69px;
  height: 19px;
  background: #5a5a5a;
  display: flex;
  align-items: center;
  gap: 5px;
  padding-left: 5px;
  color: #e4e4e4;
}

.login svg {
  width: 12px;
  height: 13px;
}

/* 工具架 */
.shelf {
  display: flex;
  height: 57px;
}

.shelf-side {
  width: 16px;
  margin: 3px 4px 3px 1px;
  background: #373737;
  display: flex;
  flex-direction: column;
  justify-content: space-between;
  align-items: center;
}

.shelf-side button {
  height: 20px;
}

.shelf-side svg {
  width: 9px;
  height: 9px;
}

.shelf-main {
  flex: 1;
  min-width: 0;
}

.shelf-tabs {
  display: flex;
  height: 18px;
  padding-top: 3px;
  margin-right: 3px;
  box-sizing: border-box;
  background: #373737;
}

.shelf-tabs button {
  padding: 0 12px;
  border-right: 1px solid #303030;
  color: #9c9c9c;
}

.shelf-tabs button:first-child {
  padding-left: 11px;
}

.shelf-tabs .active {
  background: #444;
  color: #eee;
}

.shelf-icons {
  position: relative;
  display: flex;
  align-items: center;
  height: 36px;
  padding: 0 9px 0 2px;
}

.shelf-cell {
  flex: 1;
  height: 30px;
  display: grid;
  place-items: center;
}

.shelf-cell svg {
  width: 20px;
  height: 20px;
}

.shelf-sep {
  flex: none;
  width: 10px;
  height: 28px;
  background: linear-gradient(#999, #999) center / 2px 28px no-repeat;
}

.shelf-scroll {
  position: absolute;
  right: 7px;
  top: 5px;
  width: 11px;
  height: 26px;
  background: #3a3a3a;
  display: flex;
  flex-direction: column;
  align-items: center;
  justify-content: space-between;
}

.shelf-scroll svg {
  width: 8px;
  height: 6px;
}

.shelf-scroll i {
  width: 8px;
  height: 8px;
  border-radius: 2px;
  background: #5a5a5a;
}

/* 工作区 */
.workspace {
  flex: 1;
  min-height: 0;
  display: flex;
  border-top: 1px solid #353535;
}

.toolbox {
  width: 31px;
  padding: 0 5px 0 3px;
  border-right: 1px solid #3a3a3a;
  display: flex;
  flex-direction: column;
}

.tools,
.layouts {
  display: flex;
  flex-direction: column;
  gap: 1px;
}

.tools button,
.layouts button {
  width: 30px;
  height: 30px;
}

.layouts {
  margin-top: 65px;
  padding-top: 5px;
  border-top: 2px solid #888;
}

.m-logo {
  width: 28px;
  height: 26px;
  margin: auto 0 6px 1px;
}

.panel {
  flex: 1;
  min-width: 0;
  margin: 2px 5px 2px 0;
  border: 1px solid #7c7c7c;
  display: flex;
  flex-direction: column;
}

.panel-menu {
  display: flex;
  gap: 12px;
  padding: 0 7px;
}

.panel-menu button {
  height: 18px;
}

.panel-tools {
  display: flex;
  align-items: center;
  height: 18px;
}

.panel-cell {
  flex: none;
  width: 16px;
  height: 15px;
  display: grid;
  place-items: center;
}

.panel-cell svg {
  width: 13px;
  height: 13px;
}

.num {
  width: 31px;
  height: 14px;
  margin: 0 2px 0 3px;
  background: #333;
  padding: 0 4px;
}

.combo--view {
  width: 125px;
  height: 15px;
  margin-left: 2px;
}

.canvas {
  position: relative;
  flex: 1;
  min-height: 0;
  background: #5b5b5b;
}

.grid-svg {
  width: 100%;
  height: 100%;
}

.gizmo {
  position: absolute;
  left: 9px;
  bottom: 12px;
  width: 26px;
  height: 26px;
}

.camera-name {
  position: absolute;
  left: 0;
  right: 15px;
  bottom: 4px;
  text-align: center;
  font: 700 9px/14px "Noto Sans", sans-serif;
  color: #f0f0f0;
}

/* 通道盒 */
.channel {
  width: 212px;
  padding: 0 2px 2px 2px;
  border-left: 1px solid #383838;
  border-right: 1px solid #3a3a3a;
  display: flex;
  flex-direction: column;
}

.channel-top {
  display: flex;
  justify-content: flex-end;
  gap: 6px;
  height: 20px;
  padding: 4px 2px 0;
  box-sizing: border-box;
}

.channel-top svg {
  width: 12px;
  height: 12px;
}

.channel-menu {
  display: flex;
  height: 18px;
  margin-bottom: 3px;
}

.channel-menu button {
  padding: 0 6px;
}

.channel-menu .on {
  padding: 0 5px;
  margin: 0 1px;
}

.channel-box {
  flex: 1;
  background: #2b2b2b;
}

.splitter {
  width: 72px;
  height: 11px;
  align-self: center;
  background: repeating-linear-gradient(90deg, #777 0 1px, #444 1px 3px) 0 3px / 72px 1px no-repeat;
}

.layer-tabs {
  display: flex;
  height: 16px;
  background: #383838;
}

.layer-tabs button {
  width: 43px;
  border-right: 1px solid #303030;
  color: #999;
}

.layer-tabs .active {
  background: #444;
  color: #ddd;
}

.layer-menu {
  display: flex;
  gap: 12px;
  height: 19px;
  padding-left: 8px;
}

.layer-tools {
  display: flex;
  justify-content: flex-end;
  align-items: center;
  gap: 8px;
  height: 20px;
  margin-bottom: 4px;
  padding: 0 8px;
}

.layer-tools svg {
  width: 12px;
  height: 12px;
}

.layer-list {
  height: 118px;
  margin: 0 3px;
  background: #2b2b2b;
  display: flex;
  align-items: flex-end;
}

.hscroll {
  flex: 1;
  display: flex;
  align-items: center;
  gap: 2px;
  height: 15px;
  background: #363636;
}

.hscroll svg {
  width: 8px;
  height: 10px;
}

.hscroll-track {
  flex: 1;
}

.hscroll-track i {
  display: block;
  width: 69%;
  height: 8px;
  border-radius: 3px;
  background: #5f5f5f;
}

.side-tabs {
  width: 17px;
  background: #3c3c3c;
  display: flex;
  flex-direction: column;
}

.side-tabs button {
  writing-mode: vertical-rl;
  text-orientation: sideways;
  padding: 12px 0;
  width: 16px;
  border-bottom: 1px solid #303030;
  color: #8c8c8c;
}

.side-tabs .active {
  background: #444;
  color: #eee;
}

/* 时间滑块 */
.time-row,
.range-row,
.command-row {
  display: flex;
  align-items: center;
  border-top: 1px solid #393939;
  box-sizing: border-box;
}

.time-row {
  height: 30px;
}

.timeline {
  flex: 1;
  min-width: 0;
  position: relative;
  height: 24px;
  padding-left: 30px;
  background: #2b2b2b;
  display: flex;
  overflow: hidden;
}

.now {
  position: absolute;
  left: 4px;
  top: 0;
  width: 5px;
  height: 24px;
  line-height: 31px;
  background: #555;
  color: #fff;
  font-weight: 400;
}

.tick {
  flex: 0 0 calc((100% - 10px) / 23);
  height: 14px;
  padding-left: 1px;
  box-sizing: border-box;
  font-size: 11px;
  color: #7c7c7c;
  position: relative;
}

.tick::after {
  content: "";
  position: absolute;
  left: 0;
  top: 15px;
  width: 1px;
  height: 8px;
  background: #909090;
}

.field {
  flex: none;
  width: 73px;
  height: 23px;
  padding: 0 5px;
  background: #2b2b2b;
}

.field--now {
  height: 18px;
  margin: 0 5px 0 6px;
}

.playback {
  display: flex;
  margin-right: 9px;
}

.playback button {
  width: 19px;
  height: 19px;
  display: grid;
  place-items: center;
}

.playback svg {
  width: 15px;
  height: 15px;
}

.range-row {
  height: 32px;
}

.range-row .field + .field {
  margin-left: 7px;
}

.range-slider {
  flex: 1;
  min-width: 0;
  height: 23px;
  margin: 0 6px;
  padding: 2px;
  box-sizing: border-box;
  background: #3a3a3a;
}

.range-bar {
  width: 63%;
  height: 19px;
  padding: 0 3px;
  box-sizing: border-box;
  background: #5d5d5d;
  border-radius: 2px;
  display: flex;
  align-items: center;
  gap: 3px;
}

.range-bar i {
  width: 13px;
  height: 13px;
  border-radius: 2px;
  background: #929292;
}

.range-end {
  margin-left: auto;
}

.range-right {
  display: flex;
  align-items: center;
  margin-right: 8px;
}

.sep--range {
  width: 12px;
}

.ghost-field {
  width: 84px;
  height: 20px;
  border: 1px solid #3b3b3b;
}

.range-right .drop {
  width: 22px;
}

.combo--fps {
  width: 85px;
  height: 14px;
}

.glint {
  position: absolute;
  left: 7px;
  bottom: 0;
  border: 7px solid transparent;
  border-bottom: 3px solid #fff;
  border-top: 0;
}

.cell--loop {
  width: 28px;
  padding-left: 8px;
}

.cell--run {
  margin-left: 5px;
}

.command-row {
  height: 22px;
  position: relative;
  align-items: stretch;
}

.command-row label {
  width: 38px;
  padding: 6px 0 0 7px;
  box-sizing: border-box;
}

.mel {
  width: 244px;
  margin-top: 5px;
  background: #2b2b2b;
}

.grip--mid {
  width: 3px;
  margin: 5px 2px 0;
}

.command-row output {
  flex: 1;
  margin-top: 2px;
  padding: 4px 5px 0;
  overflow: hidden;
  white-space: nowrap;
  background: #2b2b2b;
}

.caret {
  position: absolute;
  right: 32px;
  top: -5px;
  width: 2px;
  height: 20px;
  background: #eee;
}

.script {
  align-self: flex-end;
  margin: 0 8px;
}

.script svg {
  width: 15px;
  height: 14px;
}

/* 任务栏 */
.taskbar {
  flex: none;
  height: 34px;
  display: flex;
  background: #1e2b32;
}

.start {
  flex: none;
  width: 50px;
  display: grid;
  place-items: center;
  padding-top: 6px;
}

.start svg {
  width: 17px;
  height: 17px;
}

.search {
  flex: 0 1 357px;
  background: #f2f2f2;
  display: flex;
  align-items: center;
  gap: 11px;
  padding: 6px 12px 0;
  box-sizing: border-box;
  color: #333;
}

.search svg {
  flex: none;
  width: 18px;
  height: 18px;
}

.search input {
  flex: 1;
  font-size: 16px;
  line-height: 24px;
}

.search input::placeholder {
  color: #444;
  opacity: 1;
}

.apps {
  flex: 0 1 516px;
  display: grid;
  grid-template-columns: repeat(10, 1fr);
}

.apps button {
  display: grid;
  place-items: center;
  padding-top: 4px;
  margin: 3px 3px 0 0;
}

.apps svg {
  width: 24px;
  height: 24px;
}

.apps .running {
  background: #435057;
}
</style>
